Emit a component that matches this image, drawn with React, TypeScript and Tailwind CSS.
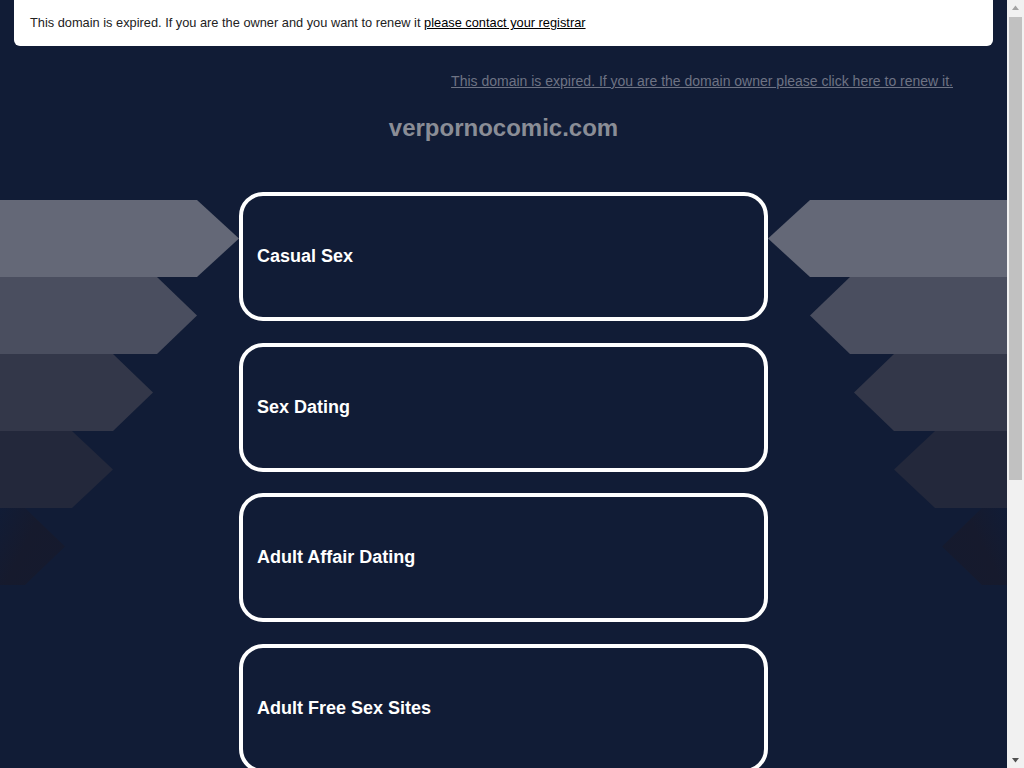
import React from "react";

const items = ["Casual Sex", "Sex Dating", "Adult Affair Dating", "Adult Free Sex Sites"];

const Wing = ({ flip = false }: { flip?: boolean }) => (
  <svg
    width="239"
    height="385"
    viewBox="0 0 239 385"
    className={flip ? "block -scale-x-100" : "block"}
  >
    <defs>
      <linearGradient id={flip ? "fadeR" : "fadeL"} x1="0" y1="0" x2="1" y2="0.6">
        <stop offset="0" stopColor="#111c36" />
        <stop offset="0.5" stopColor="#161a2d" />
        <stop offset="1" stopColor="#151a2e" />
      </linearGradient>
    </defs>
    <polygon points="0,0 197,0 239,38.5 197,77 0,77" fill="#646877" />
    <polygon points="0,77 157,77 197,115.5 157,154 0,154" fill="#4a4e5f" />
    <polygon points="0,154 113,154 153,192.5 113,231 0,231" fill="#333749" />
    <polygon points="0,231 72,231 113,269.5 72,308 0,308" fill="#23283b" />
    <polygon points="0,308 25,308 65,346.5 25,385 0,385" fill={`url(#${flip ? "fadeR" : "fadeL"})`} />
  </svg>
);

// static look of the browser's scrollbar in the shot
const Scrollbar = () => (
  <div className="w-[17px] shrink-0 bg-[#f1f1f1] flex flex-col items-center">
    <svg width="9" height="17" viewBox="0 0 9 17" className="block shrink-0">
      <polygon points="1,10 8,10 4.5,5.5" fill="#a3a3a3" />
    </svg>
    <div className="w-[13px] h-[463px] bg-[#c1c1c1]" />
    <div className="flex-1" />
    <svg width="9" height="17" viewBox="0 0 9 17" className="block shrink-0">
      <polygon points="1,7 8,7 4.5,11.5" fill="#505050" />
    </svg>
  </div>
);

export default function App() {
  return (
    <div className="h-screen flex overflow-hidden font-['Liberation_Sans',Arial,sans-serif]">
      <main className="flex-1 bg-[#111c36] overflow-hidden">
        {/* expired notice */}
        <div className="mx-[14px] h-[46px] bg-white rounded-b-[6px] flex items-center px-4 text-[12.8px] text-[#222]">
          <span>
            This domain is expired. If you are the owner and you want to renew it{" "}
            <a href="#" className="underline text-black">
              please contact your registrar
            </a>
          </span>
        </div>

        <div className="mt-[27px] px-[54px] text-right text-[14px] leading-4">
          <a href="#" className="underline text-[#6e7384]">
            This domain is expired. If you are the domain owner please click here to renew it.
          </a>
        </div>

        <h1 className="mt-[25px] text-center text-[24px] leading-[28px] font-bold text-[#8a8d96]">
          verpornocomic.com
        </h1>

        <div className="mt-[50px] flex items-start">
          <div className="flex-1 pt-[8px] flex justify-end">
            <Wing />
          </div>
          <div className="w-[529px] flex flex-col gap-[21.5px]">
            {items.map((t) => (
              <a
                key={t}
                href="#"
                className="h-[129px] shrink-0 border-4 border-white rounded-[24px] flex items-center px-[14px] text-white text-[18px] font-bold"
              >
                {t}
              </a>
            ))}
          </div>
          <div className="flex-1 pt-[8px] flex justify-start">
            <Wing flip />
          </div>
        </div>
      </main>
      <Scrollbar />
    </div>
  );
}
